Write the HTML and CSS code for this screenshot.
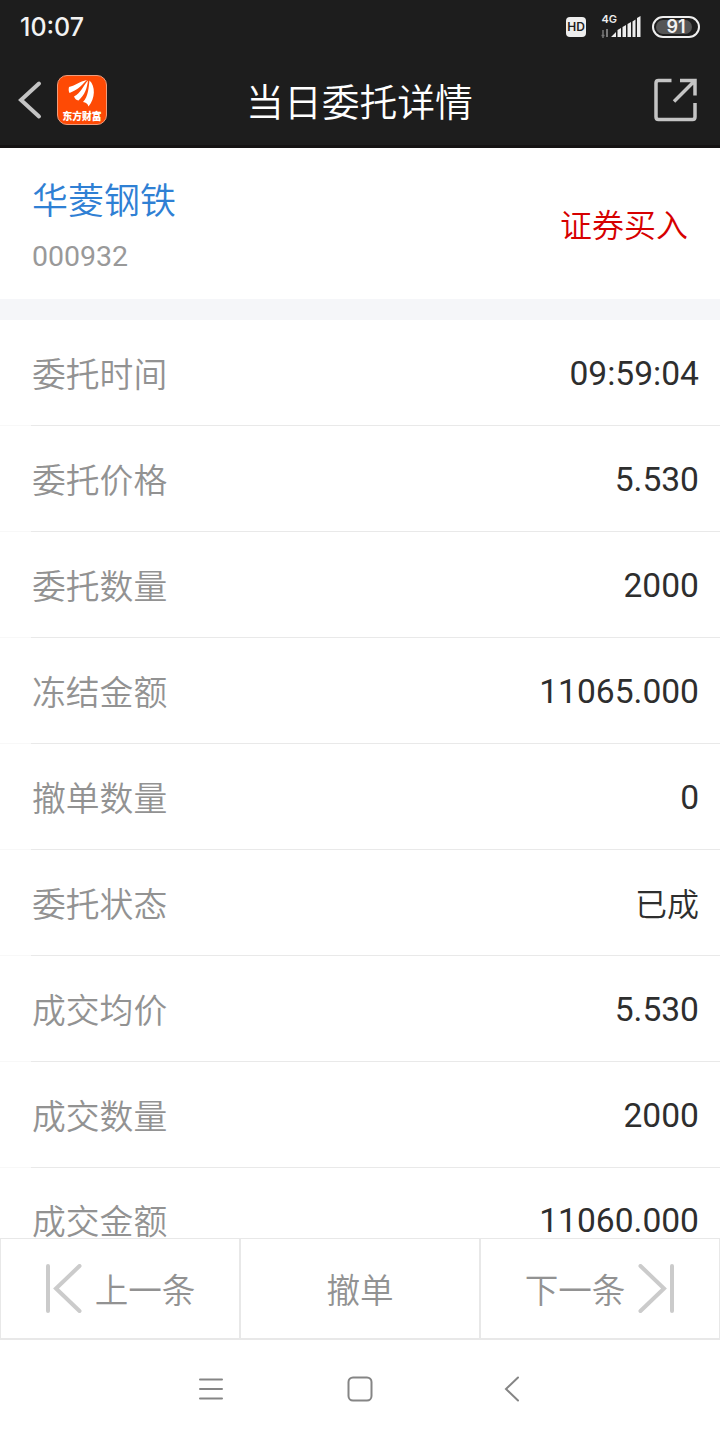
FILE: index.html
```
<!DOCTYPE html>
<html lang="zh-CN">
<head>
  <meta charset="utf-8">
  <title>当日委托详情</title>
  <link rel="stylesheet" href="styles.css">
</head>
<body>
  <div id="app">
    <div class="statusbar">
      <span class="clock">10:07</span>
      <div class="status-icons">
        <span class="hd">HD</span>
        <svg class="signal" width="42" height="28" viewBox="0 0 42 28">
          <text x="1.500" y="9.5" class="net">4G</text>
          <path d="M3 17v8M1.500 22.500h3" stroke="#777" stroke-width="1.5"/>
          <path d="M7 16v8" stroke="#999" stroke-width="1.5"/>
          <path d="M11 24l5-5v5zM17.500 17l3.500-2v9h-3.500zM22.500 14l3.500-2v12h-3.500zM27.500 11l3.500-2v15h-3.500zM32.500 8.500l3-2v17.500h-3zM37 5l3.500-2v21h-3.500z" fill="#eee"/>
        </svg>
        <span class="battery"><i class="level"></i><b>91</b></span>
      </div>
    </div>

    <div class="header">
      <div class="header-left">
        <svg width="26" height="40" viewBox="0 0 26 40">
          <path d="M23 3.500L5 20l18 16.500" fill="none" stroke="#c4c4c4" stroke-width="4" stroke-linecap="round"/>
        </svg>
        <div class="logo">
          <svg width="28" height="27" viewBox="0 0 28 27" fill="#fff">
            <path d="M1 7C8 5.500 11 1.500 19 0C14.500 4 11 9.500 1.500 13C.5 11 .5 9 1 7z"/>
            <path d="M6 16.500C13 13 15 6 20 .5C19 8 17 15 10.500 20.500C8 20 7 19 6 16.500z"/>
            <path d="M15 22C20.500 16 20.500 8 21.500 .5C27.500 6 27.500 18 20.500 26.500C20 24 18 22.500 15 22z"/>
          </svg>
          <span>东方财富</span>
        </div>
      </div>
      <h1>当日委托详情</h1>
      <svg class="share" width="44" height="44" viewBox="0 0 44 44">
        <path d="M17.500 2.500H4.500Q2 2.500 2 5V39Q2 41.500 4.500 41.500H38.500Q41 41.500 41 39V25" />
        <path d="M26 2.500H41V17.500M40.500 3L20 23.500"/>
      </svg>
    </div>

    <div class="stock">
      <div>
        <div class="name">华菱钢铁</div>
        <div class="code">000932</div>
      </div>
      <div class="type">证券买入</div>
    </div>

    <div class="list">
      <div class="row"><label>委托时间</label><span>09:59:04</span></div>
      <div class="row"><label>委托价格</label><span>5.530</span></div>
      <div class="row"><label>委托数量</label><span>2000</span></div>
      <div class="row"><label>冻结金额</label><span>11065.000</span></div>
      <div class="row"><label>撤单数量</label><span>0</span></div>
      <div class="row"><label>委托状态</label><span class="state">已成</span></div>
      <div class="row"><label>成交均价</label><span>5.530</span></div>
      <div class="row"><label>成交数量</label><span>2000</span></div>
      <div class="row last"><label>成交金额</label><span>11060.000</span></div>
    </div>

    <div class="footer">
      <div class="btn prev">
        <svg width="38" height="50" viewBox="0 0 38 50">
          <path d="M3 2v45M34.500 2L11 24.500l23.500 22.500"/>
        </svg>
        <span>上一条</span>
      </div>
      <div class="btn">撤单</div>
      <div class="btn next">
        <span>下一条</span>
        <svg width="38" height="50" viewBox="0 0 38 50">
          <path d="M35 2v45M3.500 2L27 24.500L3.500 47"/>
        </svg>
      </div>
    </div>

    <div class="navbar">
      <svg width="28" height="28" viewBox="0 0 28 28"><path d="M3 4.500h22M3 14h22M3 23.500h22"/></svg>
      <svg width="28" height="28" viewBox="0 0 28 28"><rect x="2.500" y="2.500" width="23" height="23" rx="4.500"/></svg>
      <svg width="28" height="28" viewBox="0 0 28 28"><path d="M21 2.500L9 14l12 11.500"/></svg>
    </div>
  </div>
</body>
</html>
```
FILE: styles.css
```
* {
  margin: 0;
  padding: 0;
  box-sizing: border-box;
}
body {
  font-family: Roboto, "Noto Sans CJK SC", sans-serif;
  background-color: #fff;
}
svg {
  display: block;
}
#app {
  width: 720px;
  height: 1440px;
  display: flex;
  flex-direction: column;
}
.statusbar {
  height: 54px;
  padding: 0 20px;
  display: flex;
  justify-content: space-between;
  align-items: center;
  background-color: #1d1d1d;
  color: #f2f2f2;
}
.clock {
  font: 500 25px/54px Inter, sans-serif;
}
.status-icons {
  display: flex;
  align-items: center;
}
.hd {
  width: 20px;
  height: 20px;
  margin-right: 14px;
  border-radius: 4px;
  background-color: #eee;
  color: #1d1d1d;
  font: 600 12px/20px Inter, sans-serif;
  text-align: center;
}
.signal {
  margin-right: 10px;
}
.net {
  font: 600 11px Inter, sans-serif;
  fill: #eee;
}
.battery {
  position: relative;
  width: 48px;
  height: 22px;
  border: 2px solid #eee;
  border-radius: 11px;
  padding: 2px;
}
.level {
  display: block;
  width: 91%;
  height: 14px;
  border-radius: 7px;
  background-color: #555;
}
.battery b {
  position: absolute;
  left: 0;
  top: 0;
  width: 100%;
  text-align: center;
  font: 600 18px/18px Inter, sans-serif;
}
.header {
  height: 94px;
  padding: 0 22px 0 16px;
  display: grid;
  grid-template-columns: 1fr auto 1fr;
  align-items: center;
  background-color: #1d1d1d;
  border-bottom: 3px solid #151313;
}
.header-left {
  display: flex;
  align-items: center;
  gap: 15px;
}
.logo {
  width: 50px;
  height: 50px;
  border: 1px solid #ee9c7c;
  border-radius: 10px;
  background-color: #fe4a05;
  display: flex;
  flex-direction: column;
  align-items: center;
  padding-top: 4px;
}
.logo span {
  margin-top: 3px;
  font: 900 9.800px/12px "Noto Sans CJK SC", sans-serif;
  color: #fff;
  white-space: nowrap;
}
.header h1 {
  padding: 1px 0 0 5px;
  font-size: 37.800px;
  font-weight: 350;
  font-family: "Noto Sans CJK SC", sans-serif;
  line-height: 58px;
  color: #fff;
}
.share {
  justify-self: end;
  fill: none;
  stroke: #c4c4c4;
  stroke-width: 3.500;
}
.stock {
  height: 172px;
  padding: 22px 32px 0;
  display: flex;
  justify-content: space-between;
  border-bottom: 21px solid #f5f6f9;
}
.name {
  font: 350 36px/56px "Noto Sans CJK SC", sans-serif;
  color: #2f80d4;
}
.code {
  font-size: 28.500px;
  line-height: 62px;
  color: #999;
}
.type {
  font: 350 32px/106px "Noto Sans CJK SC", sans-serif;
  color: #d60000;
}
.list {
  height: 918px;
}
.row {
  height: 106px;
  padding: 0 21px 0 32px;
  display: flex;
  justify-content: space-between;
  align-items: center;
  border-bottom: 1px solid;
  border-image: linear-gradient(to right, #f8f8f8 32px, #e9e9e9 32px) 1;
  color: #2e2e2e;
}
.row label {
  font: 350 33.800px/50px "Noto Sans CJK SC", sans-serif;
  color: #929292;
}
.row span {
  padding-top: 2px;
  font-size: 33.600px;
  line-height: 50px;
}
.row .state {
  padding: 0 0 2px;
  font: 350 32px/50px "Noto Sans CJK SC", sans-serif;
}
/* 最后一行紧贴底部按钮 */
.row.last {
  height: 70px;
  align-items: flex-end;
  border: 0;
}
.row.last label {
  line-height: 36px;
}
.row.last span {
  padding: 0;
  line-height: 34px;
}
.footer {
  height: 102px;
  display: grid;
  grid-template-columns: 238px 242px 238px;
  border: 1px solid #e8e8e8;
  border-bottom-width: 2px;
}
.btn {
  display: flex;
  align-items: center;
  justify-content: center;
  gap: 12px;
  font: 350 33.600px/50px "Noto Sans CJK SC", sans-serif;
  color: #929292;
}
.btn:nth-child(2) {
  border: solid #e8e8e8;
  border-width: 0 2px;
}
.btn svg {
  fill: none;
  stroke: #cbcbcb;
  stroke-width: 4;
  stroke-linecap: round;
}
.navbar {
  flex: 1;
  padding: 0 195px 2px 197px;
  display: flex;
  align-items: center;
  gap: 121px;
}
.navbar svg {
  fill: none;
  stroke: #858585;
  stroke-width: 2;
  stroke-linecap: round;
}
.navbar svg:last-child {
  margin-left: 2px;
}
```
